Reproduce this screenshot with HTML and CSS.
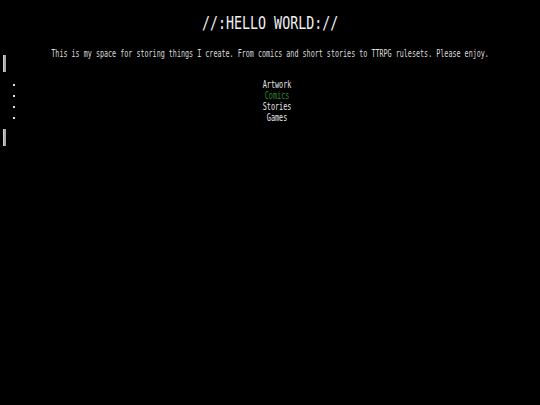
FILE: index.html
```html
<!DOCTYPE html>
<html>
<head>
<meta charset="utf-8">
<link rel="stylesheet" href="styles.css">
</head>
<body>
<div class="page">
  <h1 class="title"><span class="squeeze title-text">//:HELLO WORLD://</span></h1>
  <p class="intro"><span class="squeeze intro-text">This is my space for storing things I create. From comics and short stories to TTRPG rulesets. Please enjoy.</span></p>
  <div class="bar bar-top"></div>
  <ul class="menu">
    <li class="item"><span class="dot"></span><span class="label"><span class="squeeze">Artwork</span></span></li>
    <li class="item"><span class="dot"></span><span class="label active"><span class="squeeze">Comics</span></span></li>
    <li class="item"><span class="dot"></span><span class="label"><span class="squeeze">Stories</span></span></li>
    <li class="item"><span class="dot"></span><span class="label"><span class="squeeze">Games</span></span></li>
  </ul>
  <div class="bar bar-bottom"></div>
</div>
</body>
</html>
```

FILE: styles.css
```css
html, body {
  margin: 0;
  padding: 0;
  background: #000;
}
.page {
  width: 540px;
  height: 405px;
  display: flex;
  flex-direction: column;
  font-family: "DejaVu Sans Mono", monospace;
  color: #e6e6e6;
}
.squeeze {
  display: inline-block;
  flex: none;
  transform: scaleX(0.68);
  transform-origin: center;
  white-space: nowrap;
}
.title {
  margin: 12px 0 0 0;
  font-size: 18px;
  font-weight: normal;
  line-height: 22px;
  text-align: center;
  color: #f0f0f0;
}
.title-text {
  transform: scaleX(0.74);
}
.intro {
  display: flex;
  justify-content: center;
  margin: 14px 0 0 0;
  height: 7px;
  font-size: 10px;
  line-height: 12px;
  color: #dcdcdc;
}
.intro-text {
  transform: scaleX(0.673);
}
.bar {
  width: 2px;
  height: 17px;
  margin-left: 3px;
  background: #a8a8a8;
  border-left: 1px solid #d0d0d0;
}
.menu {
  list-style: none;
  margin: 7px 0 6px 0;
  padding: 0;
}
.item {
  display: flex;
  align-items: center;
  height: 11px;
  font-size: 10px;
  line-height: 11px;
}
.dot {
  width: 2px;
  height: 2px;
  margin-left: 13px;
  background: #e0e0e0;
}
.label {
  flex: 1;
  text-align: center;
  color: #e6e6e6;
}
.label.active {
  color: #2f8a2f;
}
```
